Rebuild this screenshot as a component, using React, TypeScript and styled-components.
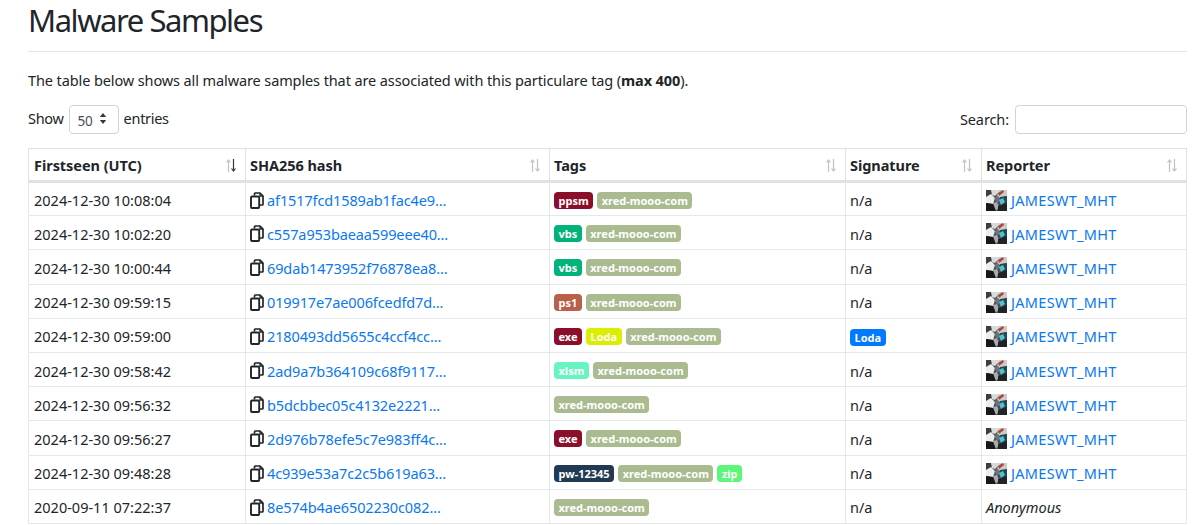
import React from "react";
import styled, { createGlobalStyle } from "styled-components";

const Global = createGlobalStyle`
  html, body { margin: 0; padding: 0; background: #fff; overflow: hidden; }
  body { font-family: "Noto Sans", "Open Sans", "Liberation Sans", sans-serif; color: #212529; font-size: 14.5px; }
`;
const Page = styled.div`
  width: 1200px; height: 525px; overflow: hidden; box-sizing: border-box;
  padding: 0 13px 0 28px;
`;
const Title = styled.h1`
  margin: 0; height: 52px; box-sizing: border-box;
  font-size: 31px; line-height: 40px; font-weight: 400; color: #212529; letter-spacing: -1.45px;
  border-bottom: 1px solid #e4e6e8;
`;
const Intro = styled.p`
  margin: 18px 0 0; line-height: 20px; letter-spacing: -0.107px;
`;
const Controls = styled.div`
  display: flex; justify-content: space-between; align-items: center;
  height: 28px; margin-top: 15px; letter-spacing: -0.3px;
`;
const Label = styled.div`
  display: flex; align-items: center; gap: 5px; line-height: 20px;
`;
const SearchLabel = styled(Label)`
  gap: 6px; letter-spacing: -0.1px;
`;
const LabelText = styled.span`
  position: relative; top: -1px;
`;
const SelectBox = styled.div`
  box-sizing: border-box; width: 50px; height: 29px; border: 1px solid #ced4da; border-radius: 4px;
  display: flex; align-items: center; gap: 7px; padding: 3px 0 0 8px; font-size: 13.5px; color: #495057;
`;
const SelectArrows = styled.svg`
  position: relative; top: -2px;
`;
const SearchInput = styled.input`
  box-sizing: border-box; width: 172px; height: 29px; border: 1px solid #ced4da; border-radius: 4px;
  background: #fff; padding: 0; margin: 0;
`;
const Table = styled.table`
  margin-top: 15px; width: 1158px; table-layout: fixed; border-collapse: collapse;
  border: 1px solid #dee2e6;
`;
const Th = styled.th`
  position: relative; box-sizing: border-box; height: 33px; padding: 0 4px; text-align: left;
  font-weight: 700; font-size: 14.5px; line-height: 20px; color: #212529; letter-spacing: -0.05px;
  border: 1px solid #dee2e6; border-bottom: 3px solid #dee2e6;
  &:first-child { padding-left: 5px; }
`;
const SortSvg = styled.svg`
  position: absolute; right: 9px; top: 10px;
`;
const Td = styled.td`
  box-sizing: border-box; height: 34.2px; padding: 2px 4px 0; font-size: 14.5px; line-height: 20px;
  border: 1px solid #e6e9ec; white-space: nowrap; overflow: hidden; color: #212529;
  &:first-child { padding-left: 5px; }
`;
const HashCell = styled.div`
  display: flex; align-items: center; gap: 3px;
`;
const Link = styled.a`
  color: #0a78f0; text-decoration: none; letter-spacing: -0.12px;
`;
const ReporterLink = styled(Link)`
  letter-spacing: 0.3px;
`;
const Tags = styled.div`
  display: flex; align-items: center; gap: 4px;
`;
const Badge = styled.span<{ $bg: string }>`
  display: inline-block; background: ${p => p.$bg}; color: #fff; font-weight: 700;
  font-size: 11px; line-height: 17px; height: 17px; padding: 0 4.5px; border-radius: 4px;
`;
const Reporter = styled.div`
  display: flex; align-items: center; gap: 4px;
`;
const Anon = styled.em`
  font-style: italic;
`;

const Sort = ({ on }: { on?: boolean }) => (
  <SortSvg width="10" height="13" viewBox="0 0 10 13">
    <path d="M2.5 13V1M.5 3.5l2-2.5 2 2.5" fill="none" stroke="#212529" strokeOpacity="0.28" strokeWidth="1.2" />
    <path d="M7.5 0v12M5.5 9.5l2 2.5 2-2.5" fill="none" stroke="#212529" strokeOpacity={on ? 0.9 : 0.28} strokeWidth="1.2" />
  </SortSvg>
);

const CopyIcon = () => (
  <svg width="14" height="17" viewBox="0 0 14 17" style={{ flex: "none" }}>
    <path d="M4.5 3.5V1.7c0-.4.3-.7.7-.7h4.8L13 4v8.3c0 .4-.3.7-.7.7H9.5" fill="none" stroke="#212529" strokeWidth="1.7" strokeLinejoin="round" />
    <path d="M10 1v3h3" fill="none" stroke="#212529" strokeWidth="1.3" />
    <rect x="1" y="4.5" width="8.2" height="11.5" rx="1" fill="#fff" stroke="#212529" strokeWidth="1.9" />
  </svg>
);

const Avatar = () => (
  <svg width="21" height="21" viewBox="0 0 21 21" style={{ flex: "none" }}>
    <rect width="21" height="21" fill="#4a4d50" />
    <path d="M0 0h6v4L0 7z" fill="#3c3f42" />
    <path d="M5 0h10L9 6 6 5z" fill="#d8dadc" />
    <path d="M13 0h8v6l-7 2-3-2z" fill="#cfcac8" />
    <path d="M12 3l5-3 1 2-5 4z" fill="#a8473f" />
    <path d="M0 7l5-3 4 4-2 6-7-1z" fill="#eceded" />
    <path d="M8 7l4-1 2 4-3 3z" fill="#6f7479" />
    <path d="M14 7l7-1v8l-6 1z" fill="#1f4a55" />
    <path d="M13 10l4-2 2 4-4 3z" fill="#4fc1d2" />
    <path d="M0 13l7 1 3 7H0z" fill="#16181a" />
    <path d="M7 13l4-1 2 5-3 4z" fill="#a9acaf" />
    <path d="M12 16l9-3v8h-9z" fill="#202427" />
  </svg>
);

const GREEN = "#a9bb8f";
const X = { t: "xred-mooo-com", c: GREEN };
const RED = "#8b0f2b";
const VBS = { t: "vbs", c: "#00b37a" };
const EXE = { t: "exe", c: RED };

type Row = { d: string; h: string; tags: { t: string; c: string }[]; sig?: string; anon?: boolean };
const rows: Row[] = [
  { d: "2024-12-30 10:08:04", h: "af1517fcd1589ab1fac4e9...", tags: [{ t: "ppsm", c: RED }, X] },
  { d: "2024-12-30 10:02:20", h: "c557a953baeaa599eee40...", tags: [VBS, X] },
  { d: "2024-12-30 10:00:44", h: "69dab1473952f76878ea8...", tags: [VBS, X] },
  { d: "2024-12-30 09:59:15", h: "019917e7ae006fcedfd7d...", tags: [{ t: "ps1", c: "#b8604a" }, X] },
  { d: "2024-12-30 09:59:00", h: "2180493dd5655c4ccf4cc...", tags: [EXE, { t: "Loda", c: "#dcee00" }, X], sig: "Loda" },
  { d: "2024-12-30 09:58:42", h: "2ad9a7b364109c68f9117...", tags: [{ t: "xlsm", c: "#66f5c0" }, X] },
  { d: "2024-12-30 09:56:32", h: "b5dcbbec05c4132e2221...", tags: [X] },
  { d: "2024-12-30 09:56:27", h: "2d976b78efe5c7e983ff4c...", tags: [EXE, X] },
  { d: "2024-12-30 09:48:28", h: "4c939e53a7c2c5b619a63...", tags: [{ t: "pw-12345", c: "#1f3a52" }, X, { t: "zip", c: "#5cf77a" }] },
  { d: "2020-09-11 07:22:37", h: "8e574b4ae6502230c082...", tags: [X], anon: true },
];

const heads = [
  { t: "Firstseen (UTC)", w: 217, on: true },
  { t: "SHA256 hash", w: 304 },
  { t: "Tags", w: 296 },
  { t: "Signature", w: 136 },
  { t: "Reporter", w: 205 },
];

export default function App() {
  return (
    <Page>
      <Global />
      <Title>Malware Samples</Title>
      <Intro>The table below shows all malware samples that are associated with this particulare tag (<b>max 400</b>).</Intro>
      <Controls>
        <Label>
          <LabelText>Show</LabelText>
          <SelectBox>
            50
            <SelectArrows width="8" height="11" viewBox="0 0 8 11"><path d="M4 0l3.2 4H.8zM4 11L.8 7h6.4z" fill="#343a40" /></SelectArrows>
          </SelectBox>
          <LabelText>entries</LabelText>
        </Label>
        <SearchLabel>
          Search:
          <SearchInput aria-label="Search" />
        </SearchLabel>
      </Controls>
      <Table>
        <colgroup>{heads.map(h => <col key={h.t} width={h.w} />)}</colgroup>
        <thead>
          <tr>
            {heads.map(h => (
              <Th key={h.t}>
                {h.t}
                <Sort on={h.on} />
              </Th>
            ))}
          </tr>
        </thead>
        <tbody>
          {rows.map(r => (
            <tr key={r.d}>
              <Td>{r.d}</Td>
              <Td><HashCell><CopyIcon /><Link href="#">{r.h}</Link></HashCell></Td>
              <Td><Tags>{r.tags.map(t => <Badge key={t.t} $bg={t.c}>{t.t}</Badge>)}</Tags></Td>
              <Td>{r.sig ? <Badge $bg="#007bff">{r.sig}</Badge> : "n/a"}</Td>
              <Td>{r.anon ? <Anon>Anonymous</Anon> : <Reporter><Avatar /><ReporterLink href="#">JAMESWT_MHT</ReporterLink></Reporter>}</Td>
            </tr>
          ))}
        </tbody>
      </Table>
    </Page>
  );
}
